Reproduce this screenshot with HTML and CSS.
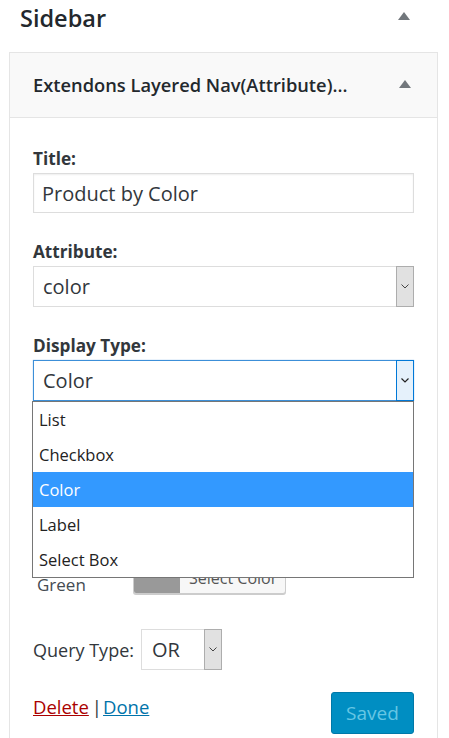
FILE: index.html
```html
<!DOCTYPE html>
<html>
<head>
<meta charset="utf-8">
<link rel="stylesheet" href="styles.css">
</head>
<body>
<div class="sidebar-head">
  <h2 class="sidebar-title">Sidebar</h2>
  <span class="tri"></span>
</div>
<div class="widget">
  <div class="widget-top">
    <h3 class="widget-title">Extendons Layered Nav(Attribute)...</h3>
    <span class="tri"></span>
  </div>
  <div class="widget-inside">
    <div class="field">
      <div class="label">Title:</div>
      <div class="input">Product by Color</div>
    </div>
    <div class="field">
      <div class="label">Attribute:</div>
      <div class="select"><span class="sel-text">color</span><span class="sel-arrow"><svg width="8" height="5" viewBox="0 0 8 5"><path d="M0.5 0.5 L4 4 L7.5 0.5" fill="none" stroke="#444" stroke-width="1"/></svg></span></div>
    </div>
    <div class="field field-display">
      <div class="label">Display Type:</div>
      <div class="select focused"><span class="sel-text">Color</span><span class="sel-arrow"><svg width="8" height="5" viewBox="0 0 8 5"><path d="M0.5 0.5 L4 4 L7.5 0.5" fill="none" stroke="#222" stroke-width="1.2"/></svg></span></div>
      <ul class="dropdown">
        <li>List</li>
        <li>Checkbox</li>
        <li class="active">Color</li>
        <li>Label</li>
        <li>Select Box</li>
      </ul>
    </div>
    <div class="color-row">
      <span class="color-name">Green</span>
      <span class="picker"><span class="swatch"></span><span class="picker-text">Select Color</span></span>
    </div>
    <div class="query-row">
      <span class="query-label">Query Type:</span>
      <div class="select small"><span class="sel-text">OR</span><span class="sel-arrow"><svg width="8" height="5" viewBox="0 0 8 5"><path d="M0.5 0.5 L4 4 L7.5 0.5" fill="none" stroke="#444" stroke-width="1"/></svg></span></div>
    </div>
    <div class="actions">
      <div class="links"><a class="delete">Delete</a><span class="sep">|</span><a class="done">Done</a></div>
      <span class="btn-saved">Saved</span>
    </div>
  </div>
</div>
</body>
</html>
```
FILE: styles.css
```css
* { box-sizing: border-box; }
html, body { margin: 0; padding: 0; background: #fff; }
body {
  font-family: "Open Sans", "Noto Sans", sans-serif;
  color: #32373c;
  width: 449px;
  height: 738px;
  overflow: hidden;
}
.sidebar-head {
  display: flex;
  align-items: flex-start;
  justify-content: space-between;
  padding: 0 39px 0 20px;
  height: 52px;
}
.sidebar-title {
  margin: 2px 0 0 0;
  font-size: 23.5px;
  font-weight: 600;
  color: #23282d;
  line-height: 32px;
}
.sidebar-head .tri { margin-top: 12px; }
.tri {
  width: 0; height: 0;
  border-left: 6px solid transparent;
  border-right: 6px solid transparent;
  border-bottom: 8px solid #72777c;
}
.widget {
  margin-left: 9px;
  width: 429px;
  height: 700px;
  border: 1px solid #e5e5e5;
  border-bottom: none;
}
.widget-top {
  height: 65px;
  background: #f9f9f9;
  border-bottom: 1px solid #e5e5e5;
  display: flex;
  align-items: flex-start;
  justify-content: space-between;
  padding: 0 26px 0 23px;
}
.widget-title {
  margin: 20px 0 0 0;
  font-size: 18.3px;
  font-weight: 600;
  color: #23282d;
  line-height: 24px;
}
.widget-top .tri { margin-top: 27px; }
.widget-inside {
  padding: 30px 23px 0 23px;
}
.field { margin-bottom: 28px; }
.label {
  font-size: 17.2px;
  font-weight: 700;
  color: #32373c;
  line-height: 22px;
  height: 25px;
}
.input, .select {
  height: 41px;
  border: 1px solid #ddd;
  box-shadow: inset 0 1px 2px rgba(0,0,0,0.07);
  background: #fff;
  font-size: 20px;
  color: #32373c;
  display: flex;
  align-items: center;
}
.input { padding-left: 8px; height: 40px; margin-bottom: 0; }
.select { padding-left: 9px; justify-content: space-between; box-shadow: none; }
.sel-text { flex: 1; }
.sel-arrow {
  width: 18px;
  align-self: stretch;
  margin: -1px -1px -1px 0;
  background: #e1e1e1;
  border: 1px solid #adadad;
  display: flex;
  align-items: center;
  justify-content: center;
}
.select.focused { border-color: #3c8fd8; box-shadow: 0 0 1px #7fb4e4; }
.select.focused .sel-arrow { background: #e5f1fb; border-color: #0078d7; }
.field-display { position: relative; margin-bottom: 0; }
.dropdown {
  position: absolute;
  left: -1px;
  top: 66px;
  width: 382px;
  margin: 0;
  padding: 0;
  list-style: none;
  background: #fff;
  border: 1px solid #767676;
  z-index: 5;
}
.dropdown li {
  height: 35px;
  line-height: 35px;
  padding-left: 6px;
  font-size: 16.5px;
  color: #222;
}
.dropdown li.active { background: #3399ff; color: #fff; }
.color-row {
  display: flex;
  align-items: flex-start;
  padding-left: 4px;
  margin-top: 160px;
  height: 34px;
}
.color-name {
  font-size: 17px;
  line-height: 23px;
  color: #444b52;
  width: 96px;
  margin-top: 12px;
}
.picker {
  display: flex;
  height: 33px;
  width: 153px;
  border: 1px solid #ccc;
  border-radius: 3px;
  box-shadow: 0 1px 0 #ccc;
  background: #f7f7f7;
  overflow: hidden;
}
.swatch { width: 46px; background: #999; }
.picker-text { padding-left: 9px; font-size: 16px; color: #555; line-height: 33px; }
.query-row {
  display: flex;
  align-items: center;
  margin-top: 34px;
  gap: 7px;
}
.query-label { font-size: 18px; color: #32373c; }
.select.small { width: 81px; height: 41px; padding-left: 10px; }
.actions {
  display: flex;
  justify-content: space-between;
  align-items: flex-start;
  margin-top: 22px;
}
.links { font-size: 18.5px; line-height: 24px; margin-top: 3px; color: #32373c; }
.delete { color: #a00; text-decoration: underline; }
.done { color: #0073aa; text-decoration: underline; }
.sep { color: #32373c; margin: 0 1px 0 3px; }
.btn-saved {
  width: 83px;
  height: 42px;
  background: #008ec2;
  border: 1px solid #0078a8;
  border-radius: 3px;
  color: #66c6e4;
  font-size: 19px;
  display: flex;
  align-items: center;
  justify-content: center;
}
```
